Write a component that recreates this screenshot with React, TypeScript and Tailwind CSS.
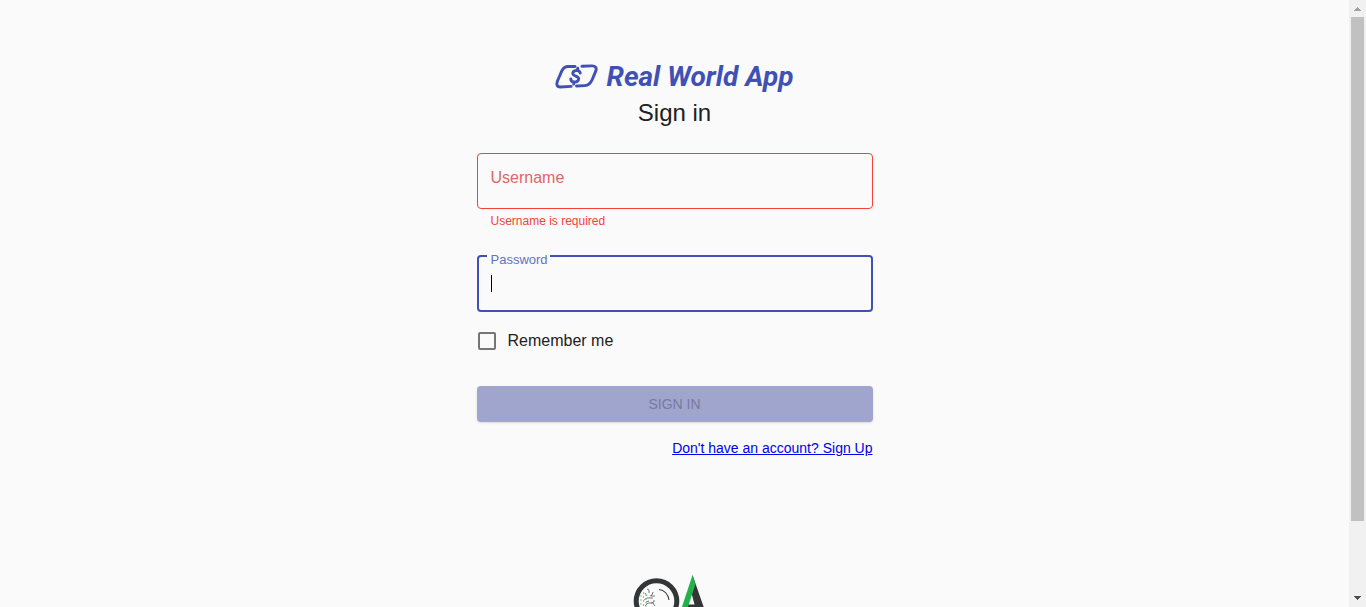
import React from "react";

function BrandMark() {
  return (
    <svg viewBox="0 1 44 26" className="h-[26px] w-[43px]" fill="none" stroke="currentColor" strokeWidth="3" strokeLinecap="round" strokeLinejoin="round" aria-hidden="true">
      <path d="M20.5 3.2 H13.5 C10.5 3.2 8.6 4.5 7.2 7.2 L2.6 17.8 C1.2 21.6 2 24.2 5.2 24.2 L16.5 23.6" />
      <path d="M27.5 3 L37.5 2.6 C41.5 2.4 42.8 4.6 41.8 7.8 L38 16.8 C36.4 20.6 34.3 22.6 30.6 22.8 L22 23.2" />
      <path strokeWidth="3" d="M25.8 10 C25.4 7.9 23.8 7.1 21.7 7.3 C19.2 7.6 17.9 9 18.3 10.9 C18.9 13.6 24.2 12.8 24.2 15.8 C24.2 18 22.2 19.2 19.8 19.1 C17.6 19 16.2 17.9 16.2 16 M23.3 5 L22.7 7 M19.7 19.1 L19.1 21.2" />
    </svg>
  );
}

function FooterLogo() {
  return (
    <svg viewBox="0 0 94 50" className="h-[50px] w-[94px]" fill="none" aria-label="QA" role="img">
      <circle cx="28.5" cy="26" r="20.3" stroke="#333537" strokeWidth="5" />
      <path d="M31 14.5 C36 15 40 19 41 25" stroke="#333537" strokeWidth="1.1" />
      <path d="M21 18 V15 L19 14 M25 17 L24 20 L22 21 M17 18 L19 21 M27 21 H23 M16 25 L19 23 H25 M26 25 V27 L23 28 M18 27 L21 26 M17 31 L20 28 H25 L27 31" stroke="#77797a" strokeWidth="1" />
      <path d="M13 20 V34 M15.5 17 V34 M18 19 V34" stroke="#7bce93" strokeWidth="1" strokeDasharray="2 2" />
      <path d="M64.5 0 L82 50 H74 L68.2 32 H58 L60 29.5 H66.5 L63.5 18 Z" fill="#333537" />
      <path d="M64.5 0 L67.5 9 L54 50 H48 Z" fill="#22b24c" />
    </svg>
  );
}

function ScrollTrack() {
  return (
    <div className="flex w-[17px] shrink-0 flex-col items-center bg-[#f1f1f1]" aria-hidden="true">
      <svg viewBox="0 0 17 17" className="h-[17px] w-[17px] shrink-0" shapeRendering="crispEdges">
        <path d="M5 11 H12 V10 H11 V9 H10 V8 H9 V7 H8 V8 H7 V9 H6 V10 H5 Z" fill="#a3a3a3" />
      </svg>
      <div className="flex w-full flex-1 flex-col px-[2px]">
        <div className="basis-[88%] bg-[#c1c1c1]" />
      </div>
      <svg viewBox="0 0 17 17" className="h-[17px] w-[17px] shrink-0" shapeRendering="crispEdges">
        <path d="M5 6 H12 V7 H11 V8 H10 V9 H9 V10 H8 V9 H7 V8 H6 V7 H5 Z" fill="#505050" />
      </svg>
    </div>
  );
}

export default function App() {
  return (
    <div className="flex h-screen overflow-hidden bg-[#fafafa] font-['Liberation_Sans',Arial,sans-serif] text-[#212121]">
      <main className="flex flex-1 flex-col items-center overflow-hidden px-6 pt-16">
        <div className="flex w-full max-w-[396px] shrink-0 flex-col">
          <div className="flex h-[26px] items-center justify-center gap-2 text-[#3f51b5]">
            <BrandMark />
            <span className="font-[Roboto,sans-serif] text-[28px] leading-7 font-bold whitespace-nowrap italic">Real World App</span>
          </div>
          <h1 className="mt-[7px] text-center text-2xl">Sign in</h1>
          <form className="mt-6 flex flex-col" onSubmit={(e) => e.preventDefault()}>
            <div className="relative">
              <input id="username" type="text" aria-invalid="true" aria-describedby="username-error" className="block h-14 w-full rounded border border-[#f44336] bg-transparent px-[13px] outline-none" />
              <label htmlFor="username" className="absolute top-[13px] left-[14px] text-base text-[#dc6668]">Username</label>
            </div>
            <p id="username-error" className="mt-[2px] px-[14px] text-xs leading-5 text-[#f44336]">Username is required</p>
            <div className="relative mt-6">
              <input id="password" type="password" className="block h-[57px] w-full rounded border-2 border-[#3f51b5] bg-transparent px-3 caret-transparent outline-none" />
              <label htmlFor="password" className="absolute -top-[3px] left-[10px] bg-[#fafafa] pr-[2px] pl-1 text-[13px] leading-4 text-[#6472c2]">Password</label>
              <span className="absolute top-5 left-[14px] h-[17px] w-px bg-black" aria-hidden="true" />
            </div>
            <label className="mt-2 flex h-[42px] items-center gap-3 text-base">
              <input type="checkbox" className="ml-px size-[18px] appearance-none rounded-xs border-2 border-[#757575] checked:bg-[#3f51b5]" />
              Remember me
            </label>
            <button type="submit" disabled className="mt-6 h-9 rounded bg-[#9fa5cd] text-sm text-[#777b9d] shadow-sm">SIGN IN</button>
            <a href="#signup" className="mt-4 self-end text-sm text-[#0000ee] underline">Don't have an account? Sign Up</a>
          </form>
        </div>
        <footer className="mt-[117px] shrink-0">
          <FooterLogo />
        </footer>
      </main>
      <ScrollTrack />
    </div>
  );
}
